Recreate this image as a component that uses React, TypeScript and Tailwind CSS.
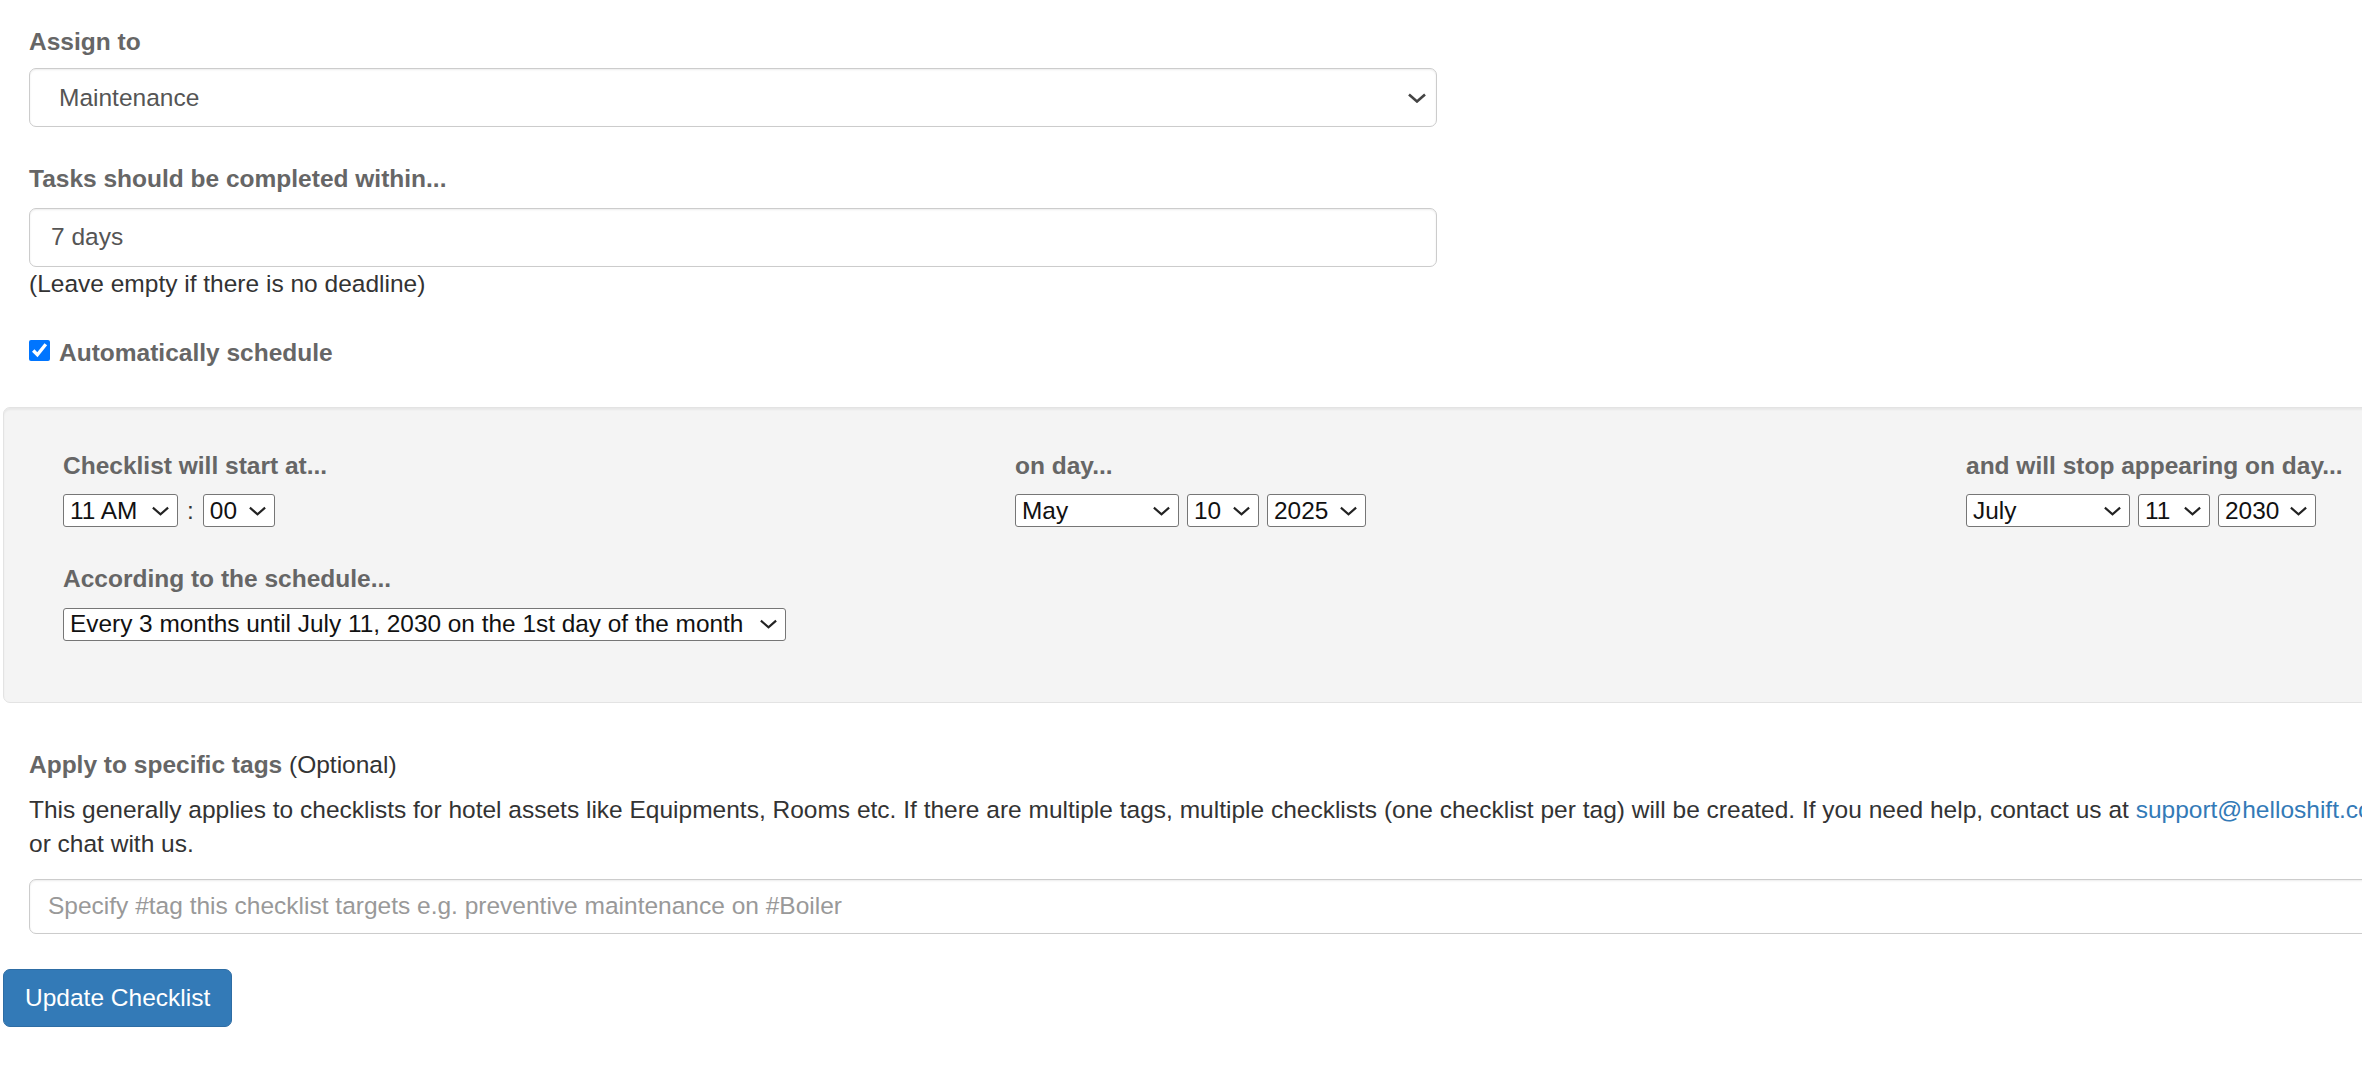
import React from 'react';

function Chevron({ className, stroke = 2.4 }: { className?: string; stroke?: number }) {
  return (
    <svg viewBox="0 0 20 10" className={className} fill="none" stroke="currentColor" strokeWidth={stroke}>
      <path d="M2 1.5l8 7 8-7" />
    </svg>
  );
}

// full-width bootstrap-ish select
function FormSelect({ value }: { value: string }) {
  return (
    <div className="flex h-[59px] w-[1408px] items-center justify-between rounded-[7px] border border-[#ccc] bg-white pl-[29px] pr-[9px] text-[#555] shadow-[inset_0_1px_2px_rgba(0,0,0,0.075)]">
      <span>{value}</span>
      <Chevron className="h-[10px] w-[20px] text-[#444]" stroke={2.6} />
    </div>
  );
}

// plain browser-looking select used in the schedule box
function MiniSelect({ value, width }: { value: string; width: string }) {
  return (
    <div
      className={`flex h-[33px] shrink-0 items-center justify-between rounded-[3px] border border-[#767676] bg-white pl-[6px] pr-[7px] text-[24.4px] leading-none text-[#111] ${width}`}
    >
      <span className="whitespace-nowrap">{value}</span>
      <Chevron className="h-[10px] w-[19px] shrink-0 text-[#222]" stroke={2.3} />
    </div>
  );
}

function Label({ children, className = '' }: { children: React.ReactNode; className?: string }) {
  return <div className={`font-bold text-[#666] ${className}`}>{children}</div>;
}

export default function App() {
  return (
    <div className="h-screen w-screen overflow-hidden bg-white font-['Liberation_Sans',Arial,sans-serif] text-[24.5px] leading-[34.3px] text-[#333]">
      <div className="w-[2900px] pl-[3px] pt-[25px]">
        <div className="pl-[26px]">
          <Label className="mb-[9px]">Assign to</Label>
          <FormSelect value="Maintenance" />

          <Label className="mb-[11px] mt-[35px]">Tasks should be completed within...</Label>
          <input
            type="text"
            defaultValue="7 days"
            className="block h-[59px] w-[1408px] rounded-[7px] border border-[#ccc] bg-white px-[21px] text-[#555] shadow-[inset_0_1px_2px_rgba(0,0,0,0.075)] outline-none"
          />
          <div>(Leave empty if there is no deadline)</div>

          <label className="mt-[35px] flex items-start gap-[9px]">
            <input type="checkbox" defaultChecked className="m-0 mt-[4px] h-[21px] w-[21px] shrink-0" />
            <span className="font-bold text-[#666]">Automatically schedule</span>
          </label>
        </div>

        {/* schedule box */}
        <div className="mt-[37px] rounded-[7px] border border-[#e3e3e3] bg-[#f4f4f4] pb-[61px] pl-[59px] pt-[41px] shadow-[inset_0_2px_2px_rgba(0,0,0,0.05)]">
          <div className="flex">
            <div className="w-[952px] shrink-0">
              <Label className="mb-[11px]">Checklist will start at...</Label>
              <div className="flex items-center">
                <MiniSelect value="11 AM" width="w-[115px]" />
                <span className="mx-[9px] leading-none text-[#333]">:</span>
                <MiniSelect value="00" width="w-[72px]" />
              </div>
            </div>
            <div className="w-[951px] shrink-0">
              <Label className="mb-[11px]">on day...</Label>
              <div className="flex items-center gap-[8px]">
                <MiniSelect value="May" width="w-[164px]" />
                <MiniSelect value="10" width="w-[72px]" />
                <MiniSelect value="2025" width="w-[99px]" />
              </div>
            </div>
            <div className="w-[951px] shrink-0">
              <Label className="mb-[11px]">and will stop appearing on day...</Label>
              <div className="flex items-center gap-[8px]">
                <MiniSelect value="July" width="w-[164px]" />
                <MiniSelect value="11" width="w-[72px]" />
                <MiniSelect value="2030" width="w-[98px]" />
              </div>
            </div>
          </div>

          <Label className="mb-[11px] mt-[35px]">According to the schedule...</Label>
          <MiniSelect value="Every 3 months until July 11, 2030 on the 1st day of the month" width="w-[723px]" />
        </div>

        <div className="mt-[45px] w-[2401px] pl-[26px]">
          <div>
            <span className="font-bold text-[#666]">Apply to specific tags</span> (Optional)
          </div>
          <p className="mt-[11px]">
            This generally applies to checklists for hotel assets like Equipments, Rooms etc. If there are multiple tags,
            multiple checklists (one checklist per tag) will be created. If you need help, contact us at{' '}
            <a href="#" className="text-[#337ab7]">
              support@helloshift.com
            </a>{' '}
            or chat with us.
          </p>
          <input
            type="text"
            placeholder="Specify #tag this checklist targets e.g. preventive maintenance on #Boiler"
            className="mt-[17px] block h-[55px] w-full rounded-[7px] border border-[#ccc] bg-white pl-[18px] pr-[18px] text-[#555] shadow-[inset_0_1px_2px_rgba(0,0,0,0.075)] outline-none placeholder:text-[#999]"
          />
        </div>

        <button
          type="button"
          className="mt-[35px] h-[58px] rounded-[7px] border border-[#2e6da4] bg-[#337ab7] px-[21px] text-white"
        >
          Update Checklist
        </button>
      </div>
    </div>
  );
}
